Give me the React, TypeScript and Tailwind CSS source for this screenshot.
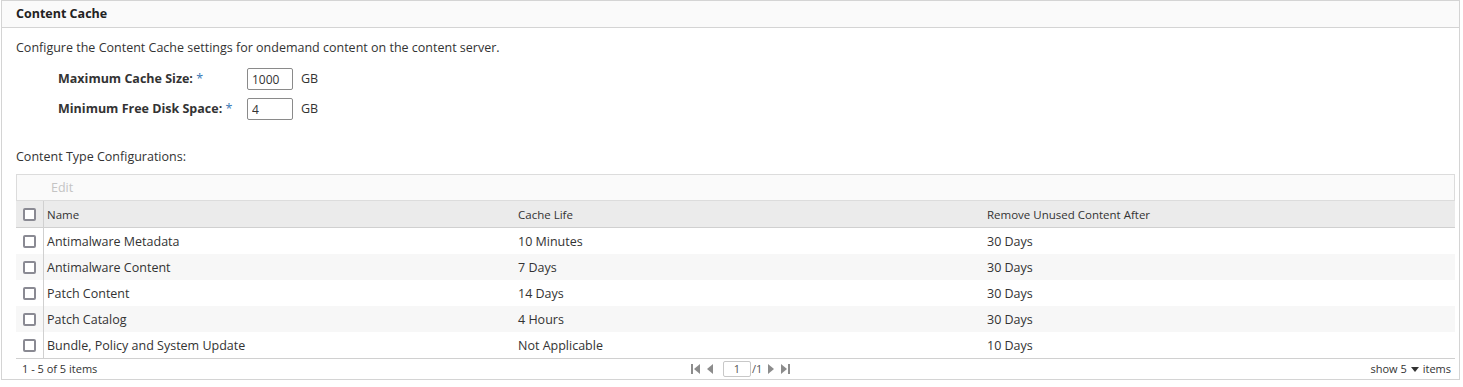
import { useState } from "react";

const rows = [
  { name: "Antimalware Metadata", life: "10 Minutes", remove: "30 Days" },
  { name: "Antimalware Content", life: "7 Days", remove: "30 Days" },
  { name: "Patch Content", life: "14 Days", remove: "30 Days" },
  { name: "Patch Catalog", life: "4 Hours", remove: "30 Days" },
  { name: "Bundle, Policy and System Update", life: "Not Applicable", remove: "10 Days" },
];

const Box = () => (
  <span className="block w-[13px] h-[13px] border-2 border-[#8a8a93] rounded-[2px] bg-white" />
);

export default function App() {
  const [maxSize, setMaxSize] = useState("1000");
  const [minFree, setMinFree] = useState("4");

  return (
    <div className="w-[1463px] h-[387px] bg-white text-[#333] text-[12.5px] font-['Open_Sans','DejaVu_Sans',sans-serif]">
      <div className="w-[1459px] ml-px border border-[#d4d4d4] h-[380px] flex flex-col">
        <div className="h-[27px] bg-[#fafafa] border-b border-[#d4d4d4] flex items-center px-[14px] font-bold text-[12.5px] text-[#222]">
          Content Cache
        </div>

        <div className="px-[14px] pt-[11px]">
          <p className="h-[18px] leading-[18px]">
            Configure the Content Cache settings for ondemand content on the content server.
          </p>

          <div className="mt-[11px] flex flex-col gap-[8px] pl-[42px]">
            <div className="flex items-center h-[22px]">
              <span className="w-[189px] font-bold">
                Maximum Cache Size: <span className="text-[#3b78b5] font-normal">*</span>
              </span>
              <input
                value={maxSize}
                onChange={(e) => setMaxSize(e.target.value)}
                className="w-[46px] h-[22px] border border-[#8a8a8a] rounded-[2px] px-[4px] outline-none text-[12px]"
              />
              <span className="ml-[8px]">GB</span>
            </div>
            <div className="flex items-center h-[22px]">
              <span className="w-[189px] font-bold">
                Minimum Free Disk Space: <span className="text-[#3b78b5] font-normal">*</span>
              </span>
              <input
                value={minFree}
                onChange={(e) => setMinFree(e.target.value)}
                className="w-[46px] h-[22px] border border-[#8a8a8a] rounded-[2px] px-[4px] outline-none text-[12px]"
              />
              <span className="ml-[8px]">GB</span>
            </div>
          </div>

          <p className="mt-[28px] h-[18px] leading-[18px]">Content Type Configurations:</p>

          <div className="mt-[8px] w-[1439px]">
            <div className="h-[27px] bg-[#fafafa] border border-[#dcdcdc] flex items-center pt-[2px] pl-[34px] text-[#c4c4c4]">
              Edit
            </div>
            <div className="h-[27px] bg-[#ebebeb] border-b border-[#d0d0d0] flex items-center text-[11.5px]">
              <div className="w-[28px] h-full flex items-center justify-center border-r border-[#d0d0d0]">
                <Box />
              </div>
              <div className="w-[467px] pl-[3px] pt-[2px]">Name</div>
              <div className="w-[469px] pl-[7px] pt-[2px]">Cache Life</div>
              <div className="flex-1 pl-[7px] pt-[2px]">Remove Unused Content After</div>
            </div>
            {rows.map((r, i) => (
              <div
                key={r.name}
                className={`h-[26px] flex items-center ${i % 2 === 1 ? "bg-[#f7f7f7]" : "bg-white"}`}
              >
                <div className="w-[28px] h-full flex items-center justify-center border-r border-[#d0d0d0]">
                  <Box />
                </div>
                <div className="w-[467px] pl-[3px] pt-[2px]">{r.name}</div>
                <div className="w-[469px] pl-[7px] pt-[2px]">{r.life}</div>
                <div className="flex-1 pl-[7px] pt-[2px]">{r.remove}</div>
              </div>
            ))}
            <div className="h-[21px] border-t border-[#d0d0d0] flex items-center text-[11px] relative">
              <span className="pl-[6px]">1 - 5 of 5 items</span>
              <div className="absolute left-[675px] top-0 h-full flex items-center gap-[6px] text-[#555]">
                <svg width="10" height="10" viewBox="0 0 10 10">
                  <rect x="0" y="0" width="2" height="10" fill="#8c8c8c" />
                  <path d="M9 0 L3 5 L9 10 Z" fill="#8c8c8c" />
                </svg>
                <svg width="6" height="10" viewBox="0 0 6 10">
                  <path d="M6 0 L0 5 L6 10 Z" fill="#8c8c8c" />
                </svg>
                <span className="ml-[4px] w-[28px] h-[16px] border border-[#c8c8c8] rounded-[2px] flex items-center justify-center text-[11px]">
                  1
                </span>
                <span className="-ml-[5px]">/1</span>
                <svg width="6" height="10" viewBox="0 0 6 10">
                  <path d="M0 0 L6 5 L0 10 Z" fill="#8c8c8c" />
                </svg>
                <svg width="10" height="10" viewBox="0 0 10 10">
                  <rect x="8" y="0" width="2" height="10" fill="#8c8c8c" />
                  <path d="M1 0 L7 5 L1 10 Z" fill="#8c8c8c" />
                </svg>
              </div>
              <div className="ml-auto pr-[4px] flex items-center gap-[4px]">
                <span>show 5</span>
                <svg width="8" height="5" viewBox="0 0 8 5">
                  <path d="M0 0 L8 0 L4 5 Z" fill="#333" />
                </svg>
                <span>items</span>
              </div>
            </div>
          </div>
        </div>
      </div>
    </div>
  );
}
